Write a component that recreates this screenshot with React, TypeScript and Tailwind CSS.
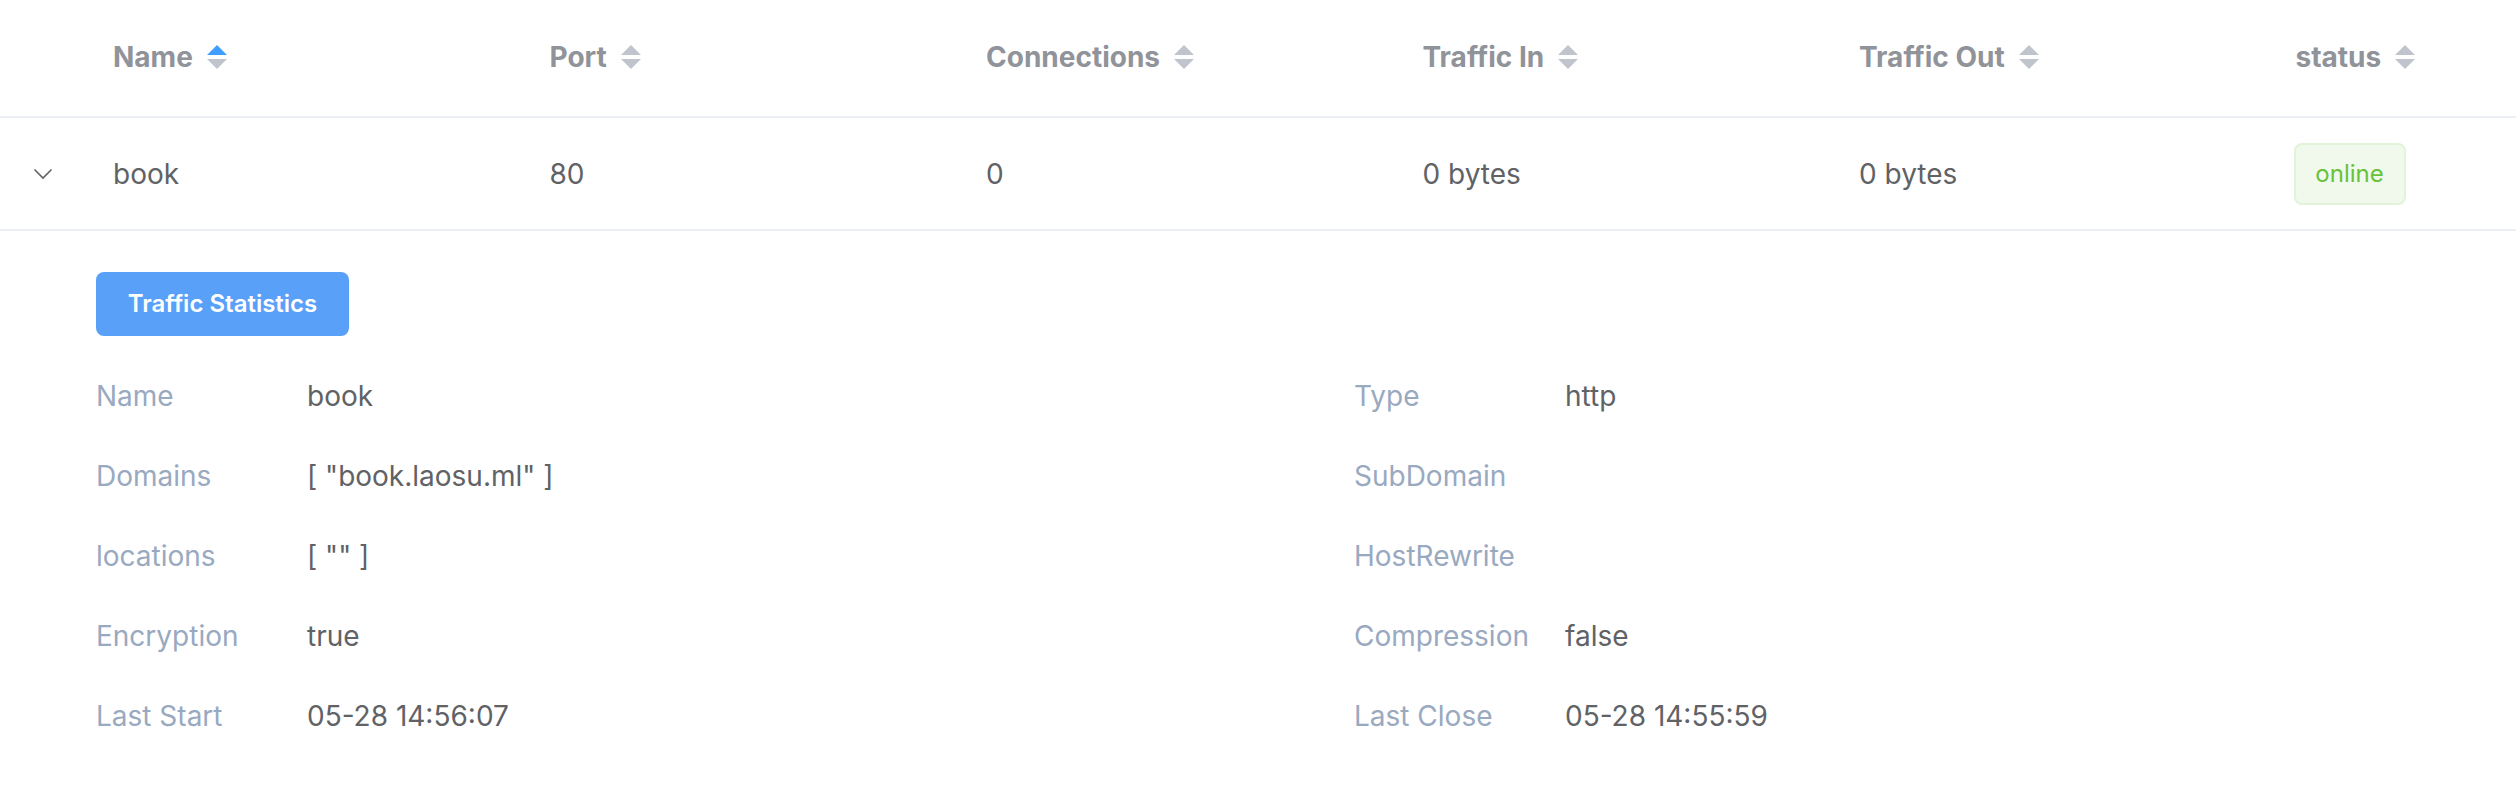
import React from "react";

const columns = ["Name", "Port", "Connections", "Traffic In", "Traffic Out", "status"];

function SortCaret({ active }: { active?: boolean }) {
  return (
    <svg width="20" height="24" viewBox="0 0 20 24" className="ml-[14px] shrink-0">
      <polygon points="10,0 20,10 0,10" fill={active ? "#409eff" : "#c0c4cc"} />
      <polygon points="0,14 20,14 10,24" fill="#c0c4cc" />
    </svg>
  );
}

function Chevron() {
  return (
    <svg width="20" height="12" viewBox="0 0 20 12" className="text-[#606266]">
      <polyline points="1.5,1.5 10,10 18.5,1.5" fill="none" stroke="currentColor" strokeWidth="1.6" />
    </svg>
  );
}

function Field({ label, value }: { label: string; value?: string }) {
  return (
    <div className="flex h-[80px] w-[1258px] items-center text-[28px]">
      <span className="w-[211px] shrink-0 text-[#99a9bf]">{label}</span>
      <span className="text-[#606266]">{value}</span>
    </div>
  );
}

export default function App() {
  return (
    <div className="h-[790px] w-[2516px] overflow-hidden bg-white font-['Inter',sans-serif]">
      <div className="w-[2710px]">
        {/* header */}
        <div className="flex h-[118px] items-center border-b-2 border-[#ebeef5] pb-[2px]">
          <div className="w-[89px] shrink-0" />
          {columns.map((c, i) => (
            <div key={c} className="flex w-[436.5px] shrink-0 items-center px-[24px]">
              <span className="text-[28px] font-bold text-[#909399]">{c}</span>
              <SortCaret active={i === 0} />
            </div>
          ))}
        </div>

        {/* row */}
        <div className="flex h-[113px] items-center border-b-2 border-[#ebeef5] text-[28px] text-[#606266]">
          <div className="flex w-[89px] shrink-0 justify-center pr-[4px]">
            <Chevron />
          </div>
          <div className="w-[436.5px] shrink-0 px-[24px]">book</div>
          <div className="w-[436.5px] shrink-0 px-[24px]">80</div>
          <div className="w-[436.5px] shrink-0 px-[24px]">0</div>
          <div className="w-[436.5px] shrink-0 px-[24px]">0 bytes</div>
          <div className="w-[436.5px] shrink-0 px-[24px]">0 bytes</div>
          <div className="w-[436.5px] shrink-0 px-[22px]">
            <span className="flex h-[62px] w-[112px] items-center justify-center rounded-[8px] border-2 border-[#e1f3d8] bg-[#f0f9eb] text-[24px] text-[#67c23a]">
              online
            </span>
          </div>
        </div>

        {/* expanded */}
        <div className="pl-[96px] pt-[41px]">
          <button className="flex h-[64px] w-[253px] items-center justify-center rounded-[8px] bg-[#58a0f8] text-[24px] font-semibold text-white">
            Traffic Statistics
          </button>
          <div className="mt-[20px] grid w-[2516px] grid-cols-2">
            <Field label="Name" value="book" />
            <Field label="Type" value="http" />
            <Field label="Domains" value={'[ "book.laosu.ml" ]'} />
            <Field label="SubDomain" />
            <Field label="locations" value={'[ "" ]'} />
            <Field label="HostRewrite" />
            <Field label="Encryption" value="true" />
            <Field label="Compression" value="false" />
            <Field label="Last Start" value="05-28 14:56:07" />
            <Field label="Last Close" value="05-28 14:55:59" />
          </div>
        </div>
      </div>
    </div>
  );
}
